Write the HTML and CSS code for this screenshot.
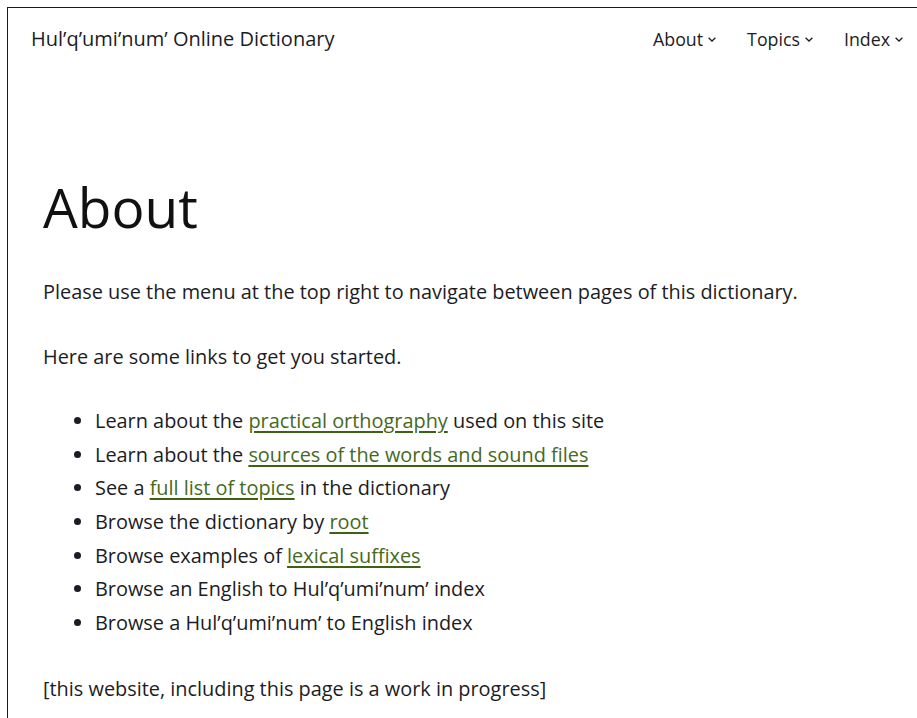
FILE: index.html
```html
<!DOCTYPE html>
<html lang="en">
<head>
<meta charset="utf-8">
<title>About – Hul’q’umi’num’ Online Dictionary</title>
<link rel="stylesheet" href="styles.css">
</head>
<body>
<div class="frame">
  <header class="site-header">
    <a class="site-title" href="#">Hul’q’umi’num’ Online Dictionary</a>
    <nav class="site-nav">
      <a class="nav-item" href="#">About<svg class="chev" viewBox="0 0 8 5" width="8" height="5"><path d="M0.6 0.8 L4 4 L7.4 0.8"/></svg></a>
      <a class="nav-item" href="#">Topics<svg class="chev" viewBox="0 0 8 5" width="8" height="5"><path d="M0.6 0.8 L4 4 L7.4 0.8"/></svg></a>
      <a class="nav-item" href="#">Index<svg class="chev" viewBox="0 0 8 5" width="8" height="5"><path d="M0.6 0.8 L4 4 L7.4 0.8"/></svg></a>
    </nav>
  </header>
  <main class="content">
    <h1 class="page-title">About</h1>
    <p class="lead">Please use the menu at the top right to navigate between pages of this dictionary.</p>
    <p class="lead">Here are some links to get you started.</p>
    <ul class="links">
      <li>Learn about the <a href="#">practical orthography</a> used on this site</li>
      <li>Learn about the <a href="#">sources of the words and sound files</a></li>
      <li>See a <a href="#">full list of topics</a> in the dictionary</li>
      <li>Browse the dictionary by <a href="#">root</a></li>
      <li>Browse examples of <a href="#">lexical suffixes</a></li>
      <li>Browse an English to Hul’q’umi’num’ index</li>
      <li>Browse a Hul’q’umi’num’ to English index</li>
    </ul>
    <p class="note">[this website, including this page is a work in progress]</p>
  </main>
</div>
</body>
</html>
```
FILE: styles.css
```css
html, body {
  margin: 0;
  padding: 0;
  background: #fff;
}

body {
  font-family: "Open Sans", "Noto Sans", sans-serif;
  color: #1c1c24;
}

.frame {
  margin: 7px 0 0 7px;
  border-top: 1px solid #1a1a1a;
  border-left: 1px solid #1a1a1a;
  min-height: 720px;
}

.site-header {
  height: 61px;
  display: flex;
  align-items: center;
  justify-content: space-between;
  padding: 0 14px 0 23px;
}

.site-title {
  font-size: 20px;
  color: #1c1c24;
  text-decoration: none;
}

.site-nav {
  display: flex;
  gap: 31px;
}

.nav-item {
  font-size: 17.8px;
  color: #1c1c24;
  text-decoration: none;
  display: flex;
  align-items: center;
  gap: 5px;
}

.chev {
  fill: none;
  stroke: #1c1c24;
  stroke-width: 1.3;
  margin-top: 2px;
}

.content {
  padding: 0 0 0 35px;
  font-size: 19.9px;
  line-height: 33.6px;
}

.page-title {
  font-size: 55px;
  font-weight: 400;
  line-height: 67px;
  margin: 104px 0 35px;
  color: #111;
}

.lead {
  margin: 0 0 31px;
}

.links {
  margin: 0 0 33px;
  padding-left: 52px;
}

.note {
  margin: 0;
}

.content a {
  color: #46691c;
  text-decoration: underline;
  text-decoration-color: #3d6212;
  text-decoration-thickness: 2px;
  text-underline-offset: 3px;
}
```
